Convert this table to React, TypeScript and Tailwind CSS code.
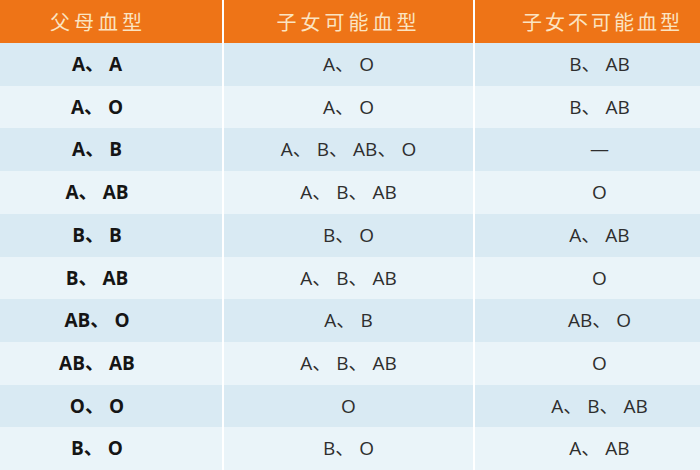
const rows: [string, string, string][] = [
  ["A、A", "A、O", "B、AB"],
  ["A、O", "A、O", "B、AB"],
  ["A、B", "A、B、AB、O", "—"],
  ["A、AB", "A、B、AB", "O"],
  ["B、B", "B、O", "A、AB"],
  ["B、AB", "A、B、AB", "O"],
  ["AB、O", "A、B", "AB、O"],
  ["AB、AB", "A、B、AB", "O"],
  ["O、O", "O", "A、B、AB"],
  ["B、O", "B、O", "A、AB"],
];

const font = { fontFamily: '"Open Sans", "Noto Sans CJK SC", sans-serif' };

function Cell({ text }: { text: string }) {
  const parts = text.split("、");
  return (
    <>
      {parts.map((p, i) => (
        <span key={i}>
          {p}
          {i < parts.length - 1 && <span className="pr-[5px]">、</span>}
        </span>
      ))}
    </>
  );
}

export default function App() {
  return (
    <div
      className="w-[700px] h-[470px] bg-white grid grid-cols-[222px_249px_225px] gap-x-[2px] grid-rows-[43px_repeat(10,1fr)] overflow-hidden"
      style={font}
    >
      <div className="bg-[#ee7417] text-[#fbe4c2] text-[20px] tracking-[4px] flex items-center justify-center pr-[26px]" style={{ fontFamily: '"Noto Sans CJK SC", sans-serif' }}>
        父母血型
      </div>
      <div className="bg-[#ee7417] text-[#fbe4c2] text-[20px] tracking-[4px] flex items-center justify-center" style={{ fontFamily: '"Noto Sans CJK SC", sans-serif' }}>
        子女可能血型
      </div>
      <div className="bg-[#ee7417] text-[#fbe4c2] text-[20px] tracking-[3px] flex items-center justify-center pl-[30px]" style={{ fontFamily: '"Noto Sans CJK SC", sans-serif' }}>
        子女不可能血型
      </div>
      {rows.map((r, i) => {
        const bg = i % 2 === 0 ? "bg-[#d9eaf3]" : "bg-[#eaf4f9]";
        return [
          <div key={i + "a"} className={`${bg} flex items-center justify-center pr-[28px] text-[19px] font-bold text-[#151515]`}>
            <Cell text={r[0]} />
          </div>,
          <div key={i + "b"} className={`${bg} flex items-center justify-center text-[19px] text-[#2e2e2e]`}>
            <Cell text={r[1]} />
          </div>,
          <div key={i + "c"} className={`${bg} flex items-center justify-center pl-[24px] text-[19px] text-[#2e2e2e]`}>
            <Cell text={r[2]} />
          </div>,
        ];
      })}
    </div>
  );
}
